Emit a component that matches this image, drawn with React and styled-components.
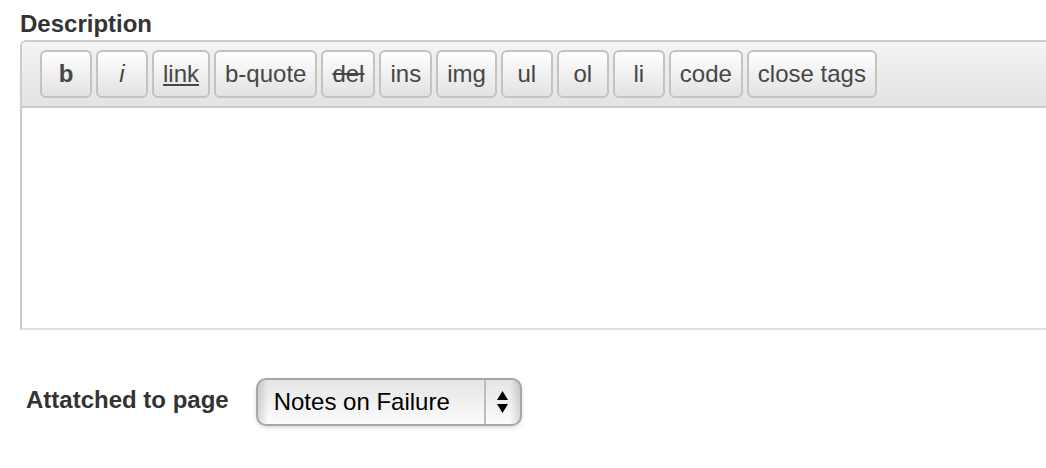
import React from "react";
import styled, { createGlobalStyle, css } from "styled-components";

const GlobalStyle = createGlobalStyle`
  *, *::before, *::after { box-sizing: border-box; }
  body {
    margin: 0;
    background: #fff;
    color: #333;
    font-family: "Liberation Sans", Arial, Helvetica, sans-serif;
    font-size: 24px;
    line-height: 28px;
  }
`;

const Form = styled.form`
  padding: 10px 0 40px 20px;
  overflow: hidden;
`;

const Label = styled.label`
  display: block;
  font-weight: bold;
`;

const Editor = styled.div`
  margin: 2px -8px 0 0;
  border: 2px solid #ccc;
  border-bottom-color: #dfdfdf;
  border-radius: 6px 6px 0 0;
  overflow: hidden;
`;

const Toolbar = styled.div`
  display: flex;
  flex-wrap: wrap;
  gap: 4px;
  padding: 8px 18px;
  border-bottom: 2px solid #ccc;
  background: linear-gradient(#f4f4f4, #e3e3e3);
`;

const TagButton = styled.button`
  min-width: 52px;
  height: 48px;
  padding: 0 9px;
  border: 2px solid #c3c3c3;
  border-radius: 6px;
  background: linear-gradient(#fff, #e2e2e2);
  color: #464646;
  font: inherit;
  ${({ $look }) => $look === "bold" && css`font-weight: bold;`}
  ${({ $look }) => $look === "italic" && css`font-style: italic;`}
  ${({ $look }) => $look === "underline" && css`text-decoration: underline;`}
  ${({ $look }) => $look === "strike" && css`text-decoration: line-through;`}
`;

const TextArea = styled.textarea`
  display: block;
  width: 100%;
  height: 220px;
  padding: 8px 18px;
  border: 0;
  outline: 0;
  resize: none;
  background: #fff;
  color: #333;
  font: inherit;
`;

const PageRow = styled.div`
  display: flex;
  align-items: flex-start;
  gap: 27px;
  margin-top: 48px;
  padding-left: 6px;

  ${Label} {
    padding-top: 8px;
  }
`;

const SelectFrame = styled.div`
  display: grid;
  grid-template-columns: 1fr 36px;
  height: 48px;
  border: 2px solid #a6a6a6;
  border-radius: 10px;
  background:
    linear-gradient(90deg, rgba(0, 0, 0, 0.14), transparent 10px, transparent calc(100% - 10px), rgba(0, 0, 0, 0.14)),
    linear-gradient(#e5e5e5, #fcfcfc);
  box-shadow: 0 2px 4px rgba(0, 0, 0, 0.14);
`;

const Select = styled.select`
  grid-area: 1 / 1 / 2 / 3;
  appearance: none;
  width: 262px;
  padding: 0 52px 0 16px;
  border: 0;
  outline: 0;
  background: transparent;
  color: #000;
  font: inherit;
`;

const Arrows = styled.span`
  grid-area: 1 / 2;
  display: grid;
  place-items: center;
  border-left: 2px solid #bdbdbd;
  pointer-events: none;
`;

const tags = [
  ["b", "bold"],
  ["i", "italic"],
  ["link", "underline"],
  ["b-quote"],
  ["del", "strike"],
  ["ins"],
  ["img"],
  ["ul"],
  ["ol"],
  ["li"],
  ["code"],
  ["close tags"],
];

export default function App() {
  return (
    <>
      <GlobalStyle />
      <Form>
        <Label htmlFor="description">Description</Label>
        <Editor>
          <Toolbar>
            {tags.map(([name, look]) => (
              <TagButton key={name} type="button" $look={look}>
                {name}
              </TagButton>
            ))}
          </Toolbar>
          <TextArea id="description" />
        </Editor>
        <PageRow>
          <Label htmlFor="page">Attatched to page</Label>
          <SelectFrame>
            <Select id="page">
              <option>Notes on Failure</option>
            </Select>
            <Arrows>
              <svg width="12" height="22" viewBox="0 0 12 22" aria-hidden="true">
                <path d="M5.500 0 11 9H0ZM5.500 22 0 13H11Z" fill="#000" />
              </svg>
            </Arrows>
          </SelectFrame>
        </PageRow>
      </Form>
    </>
  );
}
